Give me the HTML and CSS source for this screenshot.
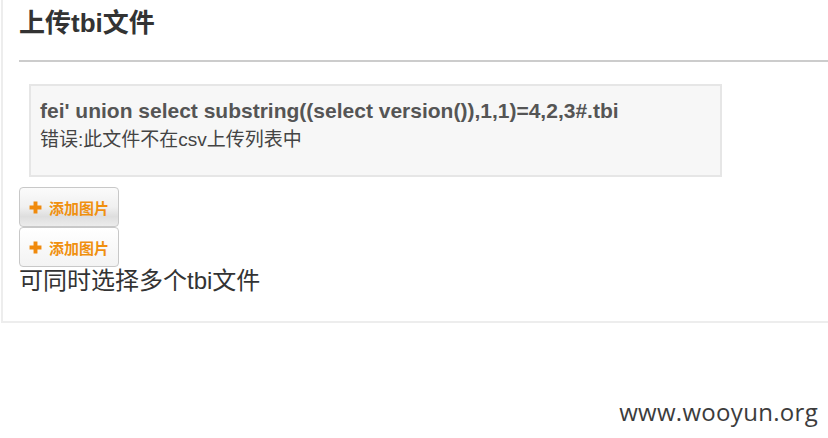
FILE: index.html
```html
<!DOCTYPE html>
<html>
<head>
<meta charset="utf-8">
<link rel="stylesheet" href="styles.css">
</head>
<body>
<div class="panel">
  <h2 class="title">上传tbi文件</h2>
  <div class="rule"></div>
  <div class="msg">
    <div class="msg-file">fei' union select substring((select version()),1,1)=4,2,3#.tbi</div>
    <div class="msg-err">错误:此文件不在csv上传列表中</div>
  </div>
  <div class="btns">
    <button class="add add-pressed"><svg class="plus" viewBox="0 0 12 12" width="13" height="13"><path d="M4.2 0.5h3.6v3.7h3.7v3.6H7.8v3.7H4.2V7.8H0.5V4.2h3.7z" fill="#f08a0c"/></svg><span>添加图片</span></button>
    <button class="add"><svg class="plus" viewBox="0 0 12 12" width="13" height="13"><path d="M4.2 0.5h3.6v3.7h3.7v3.6H7.8v3.7H4.2V7.8H0.5V4.2h3.7z" fill="#f08a0c"/></svg><span>添加图片</span></button>
  </div>
  <div class="hint">可同时选择多个tbi文件</div>
</div>
<div class="footer">
  <span class="mark">www.wooyun.org</span>
</div>
</body>
</html>
```

FILE: styles.css
```css
html, body {
  margin: 0;
  padding: 0;
  background: #fff;
}
body {
  font-family: "Liberation Sans", "Noto Sans CJK SC", sans-serif;
  color: #333;
  width: 828px;
  height: 438px;
  overflow: hidden;
}
.panel {
  margin-left: 1px;
  border-left: 2px solid #ededed;
  border-bottom: 2px solid #ededed;
  padding: 0 0 24px 16px;
}
.title {
  margin: 0;
  padding-top: 5px;
  font-size: 26px;
  line-height: 36px;
  font-weight: bold;
  color: #333;
}
.rule {
  margin-top: 19px;
  height: 2px;
  background: #cccccc;
}
.msg {
  margin: 22px 0 10px 10px;
  width: 671px;
  border: 2px solid #e6e6e6;
  background: #f7f7f7;
  padding: 10px 9px 21px 9px;
}
.msg-file {
  font-size: 21px;
  font-weight: bold;
  line-height: 29px;
  color: #555;
}
.msg-err {
  font-size: 19px;
  line-height: 29px;
  color: #444;
}
.btns {
  display: flex;
  flex-direction: column;
  align-items: flex-start;
}
.add {
  display: flex;
  align-items: center;
  gap: 7px;
  width: 100px;
  height: 40px;
  padding: 0 0 0 9px;
  margin: 0;
  border: 1px solid #c8c8c8;
  border-radius: 4px;
  background: linear-gradient(#ffffff, #f3f3f3);
  font-family: "Liberation Sans", "Noto Sans CJK SC", sans-serif;
  font-size: 15px;
  font-weight: bold;
  color: #f0900f;
}
.add-pressed {
  background: linear-gradient(#fbfbfb 0%, #f0f0f0 50%, #dedede 75%, #ececec 100%);
}
.plus {
  display: block;
}
.hint {
  font-size: 24px;
  line-height: 32px;
  margin-top: -2px;
  color: #333;
}
.footer {
  display: flex;
  justify-content: flex-end;
  padding: 72px 10px 0 0;
}
.mark {
  font-family: "Open Sans", "DejaVu Sans", sans-serif;
  font-size: 24px;
  color: #3c3c3c;
  letter-spacing: 0.3px;
}
```
